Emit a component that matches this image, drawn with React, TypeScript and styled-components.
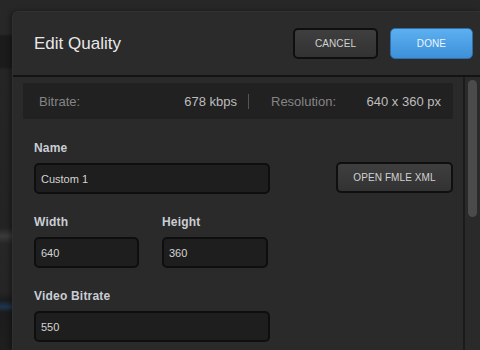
import styled, { createGlobalStyle } from "styled-components";

const GlobalStyle = createGlobalStyle`
  html, body {
    margin: 0;
    padding: 0;
    background: #1e1e1e;
  }
  body {
    font-family: "Liberation Sans", Arial, sans-serif;
  }
`;

const Page = styled.div`
  width: 480px;
  height: 350px;
  overflow: hidden;
  display: flex;
  padding: 11px 0 0 12px;
  box-sizing: border-box;
  background: linear-gradient(
    to bottom,
    #272727 0px,
    #272727 34px,
    #1b1b1b 36px,
    #1b1b1b 67px,
    #252525 70px,
    #232323 228px,
    #3a3a3a 236px,
    #262626 244px,
    #252525 292px,
    #1c1c1c 300px,
    #1d3550 307px,
    #1c1c1c 312px,
    #1e1e1e 350px
  );
`;

const Dialog = styled.div`
  flex: 1;
  display: flex;
  flex-direction: column;
  background: #2a2a2a;
  border-top-left-radius: 6px;
  box-shadow: -2px 0 4px rgba(0, 0, 0, 0.35);
  border-top: 1px solid #313131;
  border-left: 1px solid #303030;
`;

const Header = styled.div`
  height: 63px;
  flex-shrink: 0;
  display: flex;
  align-items: center;
  padding: 0 0 0 21px;
  border-bottom: 2px solid #131313;
  background: #2b2b2b;
`;

const Title = styled.h1`
  margin: 0;
  flex: 1;
  font-size: 17px;
  font-weight: 400;
  color: #e8e8e8;
`;

const Button = styled.button<{ $primary?: boolean; $w: number }>`
  width: ${(p) => p.$w}px;
  height: 31px;
  box-sizing: border-box;
  border-radius: 5px;
  font-family: "Liberation Sans", Arial, sans-serif;
  font-size: 10px;
  letter-spacing: 0.1px;
  padding: 0;
  cursor: pointer;
  border: ${(p) => (p.$primary ? "1px solid #2d6fab" : "2px solid #0f0f0f")};
  color: ${(p) => (p.$primary ? "#eef5fc" : "#d2d2d2")};
  background: ${(p) =>
    p.$primary
      ? "linear-gradient(to bottom, #5cb0f0, #3e90d8)"
      : "linear-gradient(to bottom, #3f3f3f, #323232)"};
`;

const HeaderActions = styled.div`
  display: flex;
  gap: 12px;
  margin-right: 7px;
`;

const Body = styled.div`
  flex: 1;
  display: flex;
  min-height: 0;
`;

const Content = styled.div`
  flex: 1;
  padding: 6px 10px 0 10px;
`;

const ScrollTrack = styled.div`
  width: 12px;
  border-left: 2px solid #1b1b1b;
  padding: 3px 0 0 3px;
`;

const Thumb = styled.div`
  width: 9px;
  height: 137px;
  border-radius: 5px;
  background: #4b4b4b;
`;

const InfoBar = styled.div`
  height: 36px;
  display: flex;
  align-items: center;
  padding: 0 12px 0 16px;
  background: #212121;
  font-size: 13px;
`;

const InfoCell = styled.div<{ $w?: number }>`
  display: flex;
  justify-content: space-between;
  ${(p) => (p.$w ? `width: ${p.$w}px;` : "flex: 1;")}
`;

const InfoLabel = styled.span`
  color: #858585;
`;

const InfoValue = styled.span`
  color: #bdbdbd;
`;

const Divider = styled.div`
  width: 1px;
  height: 15px;
  background: #555;
  margin: 0 22px 0 11px;
`;

const Form = styled.div`
  padding: 22px 0 0 11px;
  display: flex;
  flex-direction: column;
  gap: 21px;
`;

const Row = styled.div<{ $gap: number }>`
  display: flex;
  align-items: flex-end;
  gap: ${(p) => p.$gap}px;
`;

const Field = styled.div`
  display: flex;
  flex-direction: column;
  gap: 8px;
`;

const Label = styled.label`
  font-size: 12px;
  line-height: 14px;
  font-weight: 700;
  letter-spacing: 0.2px;
  color: #c9ced4;
`;

const Input = styled.input<{ $w: number }>`
  width: ${(p) => p.$w}px;
  height: 31px;
  box-sizing: border-box;
  border: 2px solid #0e0e0e;
  border-radius: 5px;
  background: #1e1e1e;
  color: #d4d4d4;
  font-family: "Liberation Sans", Arial, sans-serif;
  font-size: 11px;
  padding: 0 5px;
  outline: none;
`;

export default function App() {
  return (
    <>
      <GlobalStyle />
      <Page>
        <Dialog>
          <Header>
            <Title>Edit Quality</Title>
            <HeaderActions>
              <Button $w={85}>CANCEL</Button>
              <Button $w={83} $primary>
                DONE
              </Button>
            </HeaderActions>
          </Header>
          <Body>
            <Content>
              <InfoBar>
                <InfoCell $w={198}>
                  <InfoLabel>Bitrate:</InfoLabel>
                  <InfoValue>678 kbps</InfoValue>
                </InfoCell>
                <Divider />
                <InfoCell>
                  <InfoLabel>Resolution:</InfoLabel>
                  <InfoValue>640 x 360 px</InfoValue>
                </InfoCell>
              </InfoBar>
              <Form>
                <Row $gap={66}>
                  <Field>
                    <Label>Name</Label>
                    <Input $w={236} defaultValue="Custom 1" />
                  </Field>
                  <Button $w={117} style={{ marginBottom: 1 }}>
                    OPEN FMLE XML
                  </Button>
                </Row>
                <Row $gap={23}>
                  <Field>
                    <Label>Width</Label>
                    <Input $w={105} defaultValue="640" />
                  </Field>
                  <Field>
                    <Label>Height</Label>
                    <Input $w={106} defaultValue="360" />
                  </Field>
                </Row>
                <Field>
                  <Label>Video Bitrate</Label>
                  <Input $w={236} defaultValue="550" />
                </Field>
              </Form>
            </Content>
            <ScrollTrack>
              <Thumb />
            </ScrollTrack>
          </Body>
        </Dialog>
      </Page>
    </>
  );
}
